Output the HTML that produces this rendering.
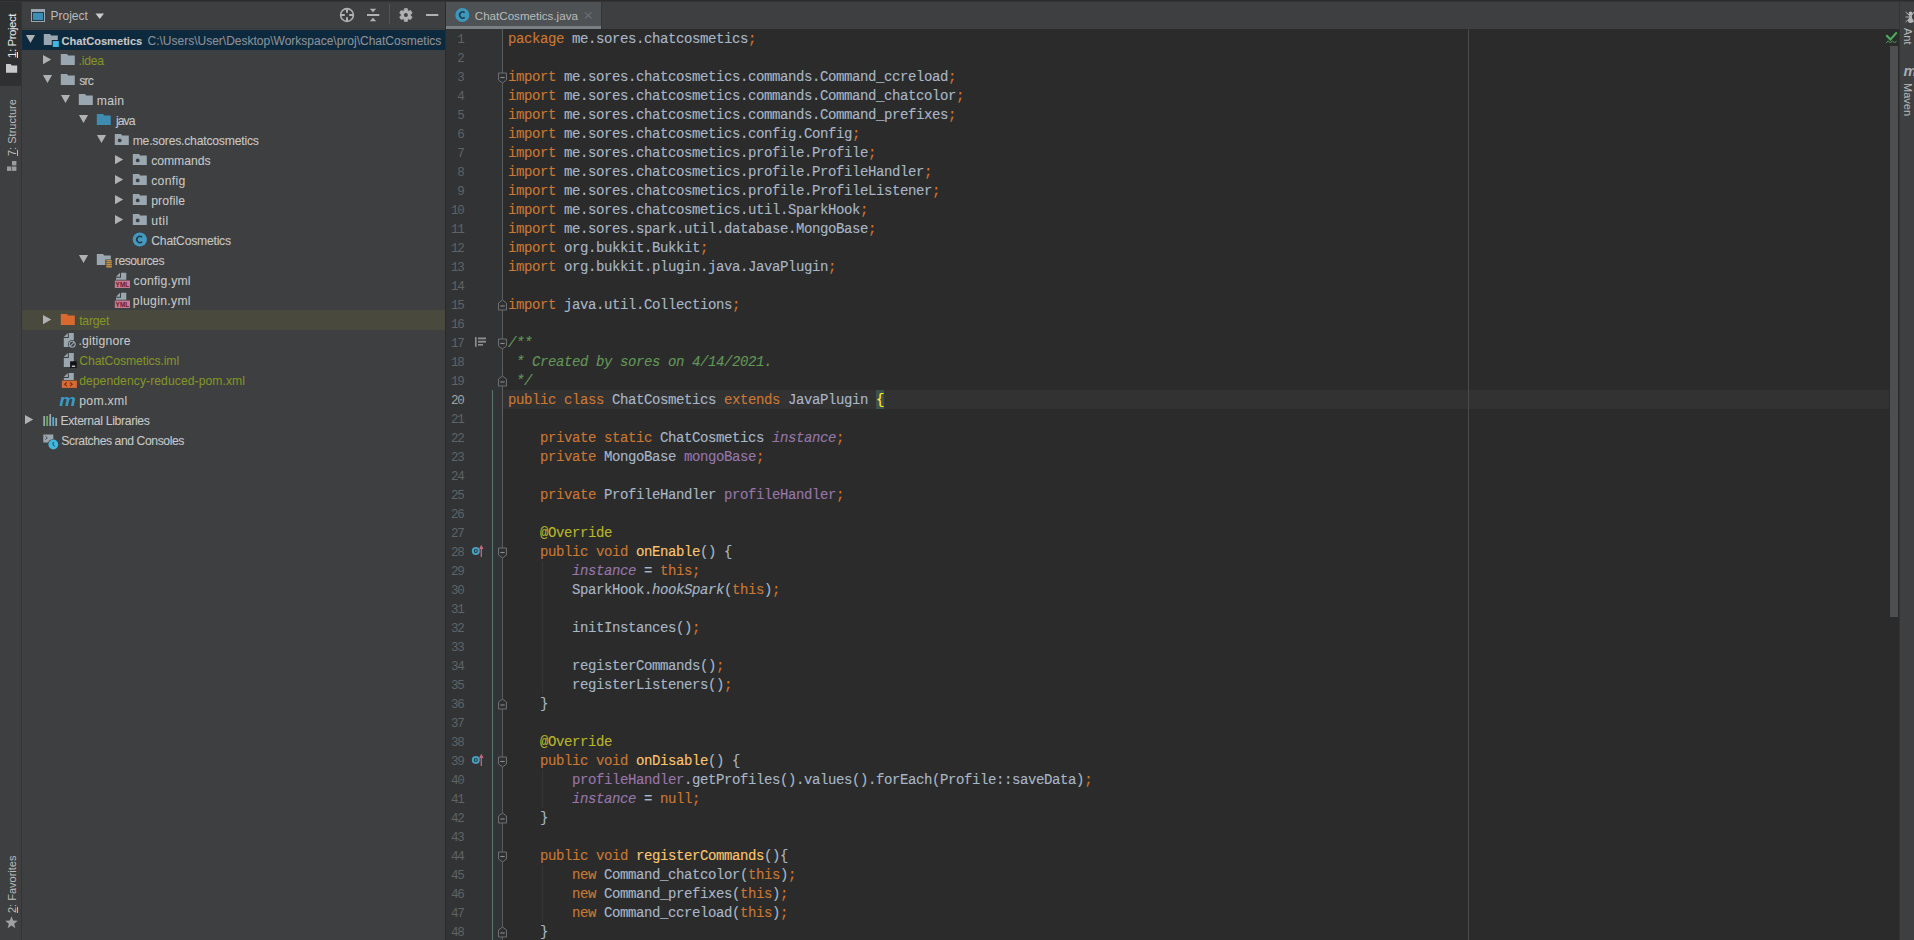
<!DOCTYPE html>
<html><head><meta charset="utf-8"><style>
*{margin:0;padding:0;box-sizing:border-box}
html,body{width:1914px;height:940px;overflow:hidden;background:#3D3F40}
body{position:relative;font-family:"Liberation Sans",sans-serif}
div{position:absolute}
#topline{left:0;top:0;width:1914px;height:2px;background:#2B2B2B;border-bottom:1px solid #343638}
#lstrip{left:0;top:2px;width:21px;height:938px;background:#3D3F40}
#lsel{left:0;top:2px;width:21px;height:84px;background:#2F3032}
#lborder{left:21px;top:2px;width:1px;height:938px;background:#323435}
.vt{font-size:11px;line-height:12px;color:#BBBBBB;white-space:nowrap;transform-origin:0 0}
.vl{transform:rotate(-90deg)}
.vr{transform:rotate(90deg)}
#panel{left:22px;top:2px;width:423px;height:938px;background:#3D3F40}
#hdrline{left:22px;top:28px;width:423px;height:1px;background:#37393B}
#divider{left:445px;top:2px;width:1px;height:938px;background:#2B2B2B}
.sel{left:22px;width:423px;height:20px;background:#0D293E}
.exclrow{left:22px;width:423px;height:20px;background:#49493D}
.tt{height:20px;line-height:20px;font-size:12.2px;color:#C8C8C8;white-space:nowrap;-webkit-text-stroke:0.08px currentColor}
.tt.b{font-weight:bold;font-size:11.1px}
.tt.path{font-size:12px;color:#8E9297}
.tt.ign{color:#869428}
#hdrtext{left:50.5px;top:8px;height:16px;line-height:16px;font-size:12px;color:#BBBBBB;white-space:nowrap}
#tabbar{left:446px;top:2px;width:1453px;height:27px;background:#3D3F40}
#tab{left:446px;top:2px;width:155px;height:24px;background:#4E5254}
#tabline{left:446px;top:26px;width:155px;height:3px;background:#7A7F84}
#tabedge{left:601px;top:2px;width:1px;height:27px;background:#333537}
#tabtext{left:474.8px;top:8px;height:16px;line-height:16px;font-size:11.6px;color:#BBBBBB;white-space:nowrap}
#gutter{left:446px;top:29px;width:56px;height:911px;background:#313335}
#scopeline{left:492px;top:390px;width:1px;height:550px;background:#5B7673}
#foldline{left:502px;top:29px;width:1px;height:911px;background:#5B5C5D}
#editor{left:503px;top:29px;width:1396px;height:911px;background:#2B2B2B}
#caretrow{left:503px;top:390px;width:1386px;height:19px;background:#323232}
#margin{left:1468px;top:29px;width:1px;height:911px;background:#4A4A4A}
#sbthumb{left:1890px;top:46px;width:8px;height:571px;background:#4D4E50}
#rstrip{left:1899px;top:2px;width:15px;height:938px;background:#3D3F40}
#rborder{left:1899px;top:2px;width:1px;height:938px;background:#323435}
.ln{left:508px;height:19px;line-height:19px;font-family:"Liberation Mono",monospace;font-size:14px;letter-spacing:-0.4px;white-space:pre;color:#A9B7C6;-webkit-text-stroke:0.12px currentColor}
.num{left:433.5px;width:30px;height:19px;line-height:19px;font-family:"Liberation Mono",monospace;font-size:12.5px;text-align:right;color:#606366;letter-spacing:-1.3px}
.num.cur{color:#A4A3A3}
.k{color:#CC7832}.t{color:#A9B7C6}.f{color:#9876AA}.d{color:#629755}.a{color:#BBB529}.m{color:#FFC66D}.i{font-style:italic}
.br{color:#FFEF28}
#bracebg{left:876px;top:390px;width:8px;height:19px;background:#3B514D}
svg{position:absolute;left:0;top:0}
</style></head><body>
<div id="topline"></div>
<div id="lstrip"></div>
<div id="lsel"></div>
<div id="lborder"></div>
<div id="panel"></div>
<div id="hdrline"></div>
<div id="divider"></div>
<div id="hdrtext">Project</div>
<div class="sel" style="top:30px"></div><div class="tt b" style="left:61.5px;top:31px">ChatCosmetics</div><div class="tt path" style="left:147.5px;top:31px">C:\Users\User\Desktop\Workspace\proj\ChatCosmetics</div><div class="tt ign" style="left:78.50px;top:51px;letter-spacing:-0.200px">.idea</div><div class="tt" style="left:79.30px;top:71px;letter-spacing:-0.880px">src</div><div class="tt" style="left:96.82px;top:91px;letter-spacing:0.267px">main</div><div class="tt" style="left:116.10px;top:111px;letter-spacing:-1.013px">java</div><div class="tt" style="left:132.66px;top:131px;letter-spacing:-0.213px">me.sores.chatcosmetics</div><div class="tt" style="left:151.14px;top:151px;letter-spacing:-0.023px">commands</div><div class="tt" style="left:151.14px;top:171px;letter-spacing:0.320px">config</div><div class="tt" style="left:151.14px;top:191px;letter-spacing:0.133px">profile</div><div class="tt" style="left:151.14px;top:211px;letter-spacing:0.480px">util</div><div class="tt" style="left:151.30px;top:231px;letter-spacing:-0.240px">ChatCosmetics</div><div class="tt" style="left:114.82px;top:251px;letter-spacing:-0.480px">resources</div><div class="tt" style="left:133.62px;top:271px;letter-spacing:0.231px">config.yml</div><div class="tt" style="left:132.82px;top:291px;letter-spacing:0.320px">plugin.yml</div><div class="exclrow" style="top:310px"></div><div class="tt ign" style="left:79.14px;top:311px;letter-spacing:-0.192px">target</div><div class="tt" style="left:78.50px;top:331px;letter-spacing:0.213px">.gitignore</div><div class="tt ign" style="left:79.30px;top:351px;letter-spacing:-0.110px">ChatCosmetics.iml</div><div class="tt ign" style="left:79.14px;top:371px;letter-spacing:0.051px">dependency-reduced-pom.xml</div><div class="tt" style="left:79.30px;top:391px;letter-spacing:0.293px">pom.xml</div><div class="tt" style="left:60.50px;top:411px;letter-spacing:-0.320px">External Libraries</div><div class="tt" style="left:61.30px;top:431px;letter-spacing:-0.427px">Scratches and Consoles</div>
<div id="tabbar"></div>
<div id="tab"></div>
<div id="tabline"></div>
<div id="tabedge"></div>
<div id="tabtext">ChatCosmetics.java</div>
<div id="gutter"></div>
<div id="scopeline"></div>
<div id="foldline"></div>
<div id="editor"></div>
<div id="caretrow"></div>
<div id="bracebg"></div>
<div id="margin"></div>
<div id="sbthumb"></div>
<div id="rstrip"></div>
<div id="rborder"></div>
<div class="vt vl" style="left:6px;top:58px;color:#E8E8E8;font-size:11.5px;letter-spacing:-0.45px"><u>1</u>: Project</div>
<div class="vt vl" style="left:6px;top:156px"><u>7</u>: Structure</div>
<div class="vt vl" style="left:6px;top:913px"><u>2</u>: Favorites</div>
<div class="vt vr" style="left:1914px;top:27.5px">Ant</div>
<div class="vt vr" style="left:1914px;top:83px">Maven</div>
<div class="num" style="top:31px">1</div><div class="num" style="top:50px">2</div><div class="num" style="top:69px">3</div><div class="num" style="top:88px">4</div><div class="num" style="top:107px">5</div><div class="num" style="top:126px">6</div><div class="num" style="top:145px">7</div><div class="num" style="top:164px">8</div><div class="num" style="top:183px">9</div><div class="num" style="top:202px">10</div><div class="num" style="top:221px">11</div><div class="num" style="top:240px">12</div><div class="num" style="top:259px">13</div><div class="num" style="top:278px">14</div><div class="num" style="top:297px">15</div><div class="num" style="top:316px">16</div><div class="num" style="top:335px">17</div><div class="num" style="top:354px">18</div><div class="num" style="top:373px">19</div><div class="num cur" style="top:392px">20</div><div class="num" style="top:411px">21</div><div class="num" style="top:430px">22</div><div class="num" style="top:449px">23</div><div class="num" style="top:468px">24</div><div class="num" style="top:487px">25</div><div class="num" style="top:506px">26</div><div class="num" style="top:525px">27</div><div class="num" style="top:544px">28</div><div class="num" style="top:563px">29</div><div class="num" style="top:582px">30</div><div class="num" style="top:601px">31</div><div class="num" style="top:620px">32</div><div class="num" style="top:639px">33</div><div class="num" style="top:658px">34</div><div class="num" style="top:677px">35</div><div class="num" style="top:696px">36</div><div class="num" style="top:715px">37</div><div class="num" style="top:734px">38</div><div class="num" style="top:753px">39</div><div class="num" style="top:772px">40</div><div class="num" style="top:791px">41</div><div class="num" style="top:810px">42</div><div class="num" style="top:829px">43</div><div class="num" style="top:848px">44</div><div class="num" style="top:867px">45</div><div class="num" style="top:886px">46</div><div class="num" style="top:905px">47</div><div class="num" style="top:924px">48</div>
<div class="ln" style="top:30px"><span class="k">package</span><span class="t"> me.sores.chatcosmetics</span><span class="k">;</span></div><div class="ln" style="top:49px"></div><div class="ln" style="top:68px"><span class="k">import</span><span class="t"> me.sores.chatcosmetics.commands.Command_ccreload</span><span class="k">;</span></div><div class="ln" style="top:87px"><span class="k">import</span><span class="t"> me.sores.chatcosmetics.commands.Command_chatcolor</span><span class="k">;</span></div><div class="ln" style="top:106px"><span class="k">import</span><span class="t"> me.sores.chatcosmetics.commands.Command_prefixes</span><span class="k">;</span></div><div class="ln" style="top:125px"><span class="k">import</span><span class="t"> me.sores.chatcosmetics.config.Config</span><span class="k">;</span></div><div class="ln" style="top:144px"><span class="k">import</span><span class="t"> me.sores.chatcosmetics.profile.Profile</span><span class="k">;</span></div><div class="ln" style="top:163px"><span class="k">import</span><span class="t"> me.sores.chatcosmetics.profile.ProfileHandler</span><span class="k">;</span></div><div class="ln" style="top:182px"><span class="k">import</span><span class="t"> me.sores.chatcosmetics.profile.ProfileListener</span><span class="k">;</span></div><div class="ln" style="top:201px"><span class="k">import</span><span class="t"> me.sores.chatcosmetics.util.SparkHook</span><span class="k">;</span></div><div class="ln" style="top:220px"><span class="k">import</span><span class="t"> me.sores.spark.util.database.MongoBase</span><span class="k">;</span></div><div class="ln" style="top:239px"><span class="k">import</span><span class="t"> org.bukkit.Bukkit</span><span class="k">;</span></div><div class="ln" style="top:258px"><span class="k">import</span><span class="t"> org.bukkit.plugin.java.JavaPlugin</span><span class="k">;</span></div><div class="ln" style="top:277px"></div><div class="ln" style="top:296px"><span class="k">import</span><span class="t"> java.util.Collections</span><span class="k">;</span></div><div class="ln" style="top:315px"></div><div class="ln" style="top:334px"><span class="d i">/**</span></div><div class="ln" style="top:353px"><span class="d i"> * Created by sores on 4/14/2021.</span></div><div class="ln" style="top:372px"><span class="d i"> */</span></div><div class="ln" style="top:391px"><span class="k">public class </span><span class="t">ChatCosmetics </span><span class="k">extends </span><span class="t">JavaPlugin </span><span class="br">{</span></div><div class="ln" style="top:410px"></div><div class="ln" style="top:429px"><span class="t">    </span><span class="k">private static </span><span class="t">ChatCosmetics </span><span class="f i">instance</span><span class="k">;</span></div><div class="ln" style="top:448px"><span class="t">    </span><span class="k">private </span><span class="t">MongoBase </span><span class="f">mongoBase</span><span class="k">;</span></div><div class="ln" style="top:467px"></div><div class="ln" style="top:486px"><span class="t">    </span><span class="k">private </span><span class="t">ProfileHandler </span><span class="f">profileHandler</span><span class="k">;</span></div><div class="ln" style="top:505px"></div><div class="ln" style="top:524px"><span class="t">    </span><span class="a">@Override</span></div><div class="ln" style="top:543px"><span class="t">    </span><span class="k">public void </span><span class="m">onEnable</span><span class="t">() {</span></div><div class="ln" style="top:562px"><span class="t">        </span><span class="f i">instance</span><span class="t"> = </span><span class="k">this;</span></div><div class="ln" style="top:581px"><span class="t">        SparkHook.</span><span class="t i">hookSpark</span><span class="t">(</span><span class="k">this</span><span class="t">)</span><span class="k">;</span></div><div class="ln" style="top:600px"></div><div class="ln" style="top:619px"><span class="t">        initInstances()</span><span class="k">;</span></div><div class="ln" style="top:638px"></div><div class="ln" style="top:657px"><span class="t">        registerCommands()</span><span class="k">;</span></div><div class="ln" style="top:676px"><span class="t">        registerListeners()</span><span class="k">;</span></div><div class="ln" style="top:695px"><span class="t">    }</span></div><div class="ln" style="top:714px"></div><div class="ln" style="top:733px"><span class="t">    </span><span class="a">@Override</span></div><div class="ln" style="top:752px"><span class="t">    </span><span class="k">public void </span><span class="m">onDisable</span><span class="t">() {</span></div><div class="ln" style="top:771px"><span class="t">        </span><span class="f">profileHandler</span><span class="t">.getProfiles().values().forEach(Profile::saveData)</span><span class="k">;</span></div><div class="ln" style="top:790px"><span class="t">        </span><span class="f i">instance</span><span class="t"> = </span><span class="k">null;</span></div><div class="ln" style="top:809px"><span class="t">    }</span></div><div class="ln" style="top:828px"></div><div class="ln" style="top:847px"><span class="t">    </span><span class="k">public void </span><span class="m">registerCommands</span><span class="t">(){</span></div><div class="ln" style="top:866px"><span class="t">        </span><span class="k">new </span><span class="t">Command_chatcolor(</span><span class="k">this</span><span class="t">)</span><span class="k">;</span></div><div class="ln" style="top:885px"><span class="t">        </span><span class="k">new </span><span class="t">Command_prefixes(</span><span class="k">this</span><span class="t">)</span><span class="k">;</span></div><div class="ln" style="top:904px"><span class="t">        </span><span class="k">new </span><span class="t">Command_ccreload(</span><span class="k">this</span><span class="t">)</span><span class="k">;</span></div><div class="ln" style="top:923px"><span class="t">    }</span></div>
<svg width="1914" height="940" viewBox="0 0 1914 940"><rect x="31" y="9" width="14" height="13" fill="#9AA7B0"/><rect x="32" y="12" width="12" height="9" fill="#1f3a48"/><rect x="33" y="13" width="10" height="7" fill="#3D8DB5"/><path d="M95.5 13.5h8.5l-4.25 5.5z" fill="#C9CBCD"/><circle cx="347" cy="15" r="6.4" fill="none" stroke="#AFB1B3" stroke-width="1.6"/><path d="M340 15h4.8M349.2 15h4.8M347 8v4.8M347 17.2v4.8" stroke="#AFB1B3" stroke-width="2"/><rect x="367" y="14" width="12.3" height="2" fill="#AFB1B3"/><path d="M369.8 8.8h6.4l-3.2 3.4z" fill="#AFB1B3"/><path d="M373 17.8l3.2 3.4h-6.4z" fill="#AFB1B3"/><rect x="389" y="4" width="1" height="20" fill="#515457"/><polygon points="404.42,8.57 407.38,8.57 408.05,11.28 410.73,10.50 412.21,13.07 410.20,15.00 412.21,16.93 410.73,19.50 408.05,18.72 407.38,21.43 404.42,21.43 403.75,18.72 401.07,19.50 399.59,16.93 401.60,15.00 399.59,13.07 401.07,10.50 403.75,11.28" fill="#AFB1B3" stroke="#AFB1B3" stroke-width="0.6" stroke-linejoin="round"/><circle cx="405.9" cy="15" r="2" fill="#3D3F40"/><rect x="426" y="14" width="12.3" height="2" fill="#AFB1B3"/><path d="M6 64h4.5l1.3 1.6h5.4v7.2h-11.2z" fill="#C7C9CB"/><rect x="12" y="161" width="4.4" height="4.4" fill="#9A9C9E"/><rect x="7" y="166.5" width="4.4" height="4.4" fill="#9A9C9E"/><rect x="12" y="166.5" width="4.4" height="4.4" fill="#9A9C9E"/><polygon points="11.50,916.20 13.15,920.53 17.78,920.76 14.16,923.67 15.38,928.14 11.50,925.60 7.62,928.14 8.84,923.67 5.22,920.76 9.85,920.53" fill="#A0A2A4"/><circle cx="462.3" cy="15" r="7" fill="#3E97BC"/><path d="M464.7 12.6a3.1 3.1 0 1 0 0 4.8" stroke="#1B3F4E" stroke-width="1.5" fill="none"/><path d="M585 12.3l6.5 6.2M591.5 12.3l-6.5 6.2" stroke="#6C7073" stroke-width="1.1"/><g fill="#B4B6B8"><circle cx="1910.6" cy="13.6" r="2"/><circle cx="1910.6" cy="17" r="1.5"/><ellipse cx="1910.6" cy="20.4" rx="2.6" ry="2.5"/></g><path d="M1905.6 12l5 4.5M1905.6 17h5M1905.6 22l5-4.5M1914 12l-3.4 4.5M1914 22l-3.4-4.5" stroke="#B4B6B8" stroke-width="1"/><text x="1903.5" y="75.6" font-family="Liberation Sans" font-weight="bold" font-style="italic" font-size="15" fill="#A9ABAD">m</text><rect x="1884" y="29" width="15" height="16" fill="#2B2B2B"/><path d="M1886.3 35.2l4.2 4.2l6.3-7" stroke="#1E3A22" stroke-width="3.2" fill="none"/><path d="M1886.3 35.2l4.2 4.2l6.3-7" stroke="#55A862" stroke-width="2.1" fill="none"/><path d="M1886.2 43l2.1-2.2 2.1 2.2 2.1-2.2 2.1 2.2 2.1-2.2" stroke="#4E9A5A" stroke-width="1" fill="none"/><path d="M25.9 35h9.2l-4.6 8z" fill="#AFB1B3"/><path d="M43.8 34h6.2l1.2 1.6h6.6v9.4h-14z" fill="#9AA7B0"/><rect x="51.8" y="40" width="8" height="8" fill="#0D293E"/><rect x="52.8" y="41" width="6" height="6" fill="#40B6E0"/><path d="M43 55v9.2l8.2-4.6z" fill="#AFB1B3"/><path d="M60.8 54h6.2l1.2 1.6h6.6v9.4h-14z" fill="#9AA7B0"/><path d="M42.9 75h9.2l-4.6 8z" fill="#AFB1B3"/><path d="M60.8 74h6.2l1.2 1.6h6.6v9.4h-14z" fill="#9AA7B0"/><path d="M60.9 95h9.2l-4.6 8z" fill="#AFB1B3"/><path d="M78.8 94h6.2l1.2 1.6h6.6v9.4h-14z" fill="#9AA7B0"/><path d="M78.9 115h9.2l-4.6 8z" fill="#AFB1B3"/><path d="M96.8 114h6.2l1.2 1.6h6.6v9.4h-14z" fill="#3E8DB0"/><path d="M96.9 135h9.2l-4.6 8z" fill="#AFB1B3"/><path d="M114.8 134h6.2l1.2 1.6h6.6v9.4h-14z" fill="#9AA7B0"/><circle cx="119.7" cy="140.4" r="1.9" fill="#3D3F40"/><path d="M115 155v9.2l8.2-4.6z" fill="#AFB1B3"/><path d="M132.8 154h6.2l1.2 1.6h6.6v9.4h-14z" fill="#9AA7B0"/><circle cx="137.70000000000002" cy="160.4" r="1.9" fill="#3D3F40"/><path d="M115 175v9.2l8.2-4.6z" fill="#AFB1B3"/><path d="M132.8 174h6.2l1.2 1.6h6.6v9.4h-14z" fill="#9AA7B0"/><circle cx="137.70000000000002" cy="180.4" r="1.9" fill="#3D3F40"/><path d="M115 195v9.2l8.2-4.6z" fill="#AFB1B3"/><path d="M132.8 194h6.2l1.2 1.6h6.6v9.4h-14z" fill="#9AA7B0"/><circle cx="137.70000000000002" cy="200.4" r="1.9" fill="#3D3F40"/><path d="M115 215v9.2l8.2-4.6z" fill="#AFB1B3"/><path d="M132.8 214h6.2l1.2 1.6h6.6v9.4h-14z" fill="#9AA7B0"/><circle cx="137.70000000000002" cy="220.4" r="1.9" fill="#3D3F40"/><circle cx="139.8" cy="239.5" r="7.1" fill="#4499BE"/><path d="M142.10000000000002 237.3a3.1 3.1 0 1 0 0 4.4" stroke="#183C4C" stroke-width="1.5" fill="none"/><path d="M78.9 255h9.2l-4.6 8z" fill="#AFB1B3"/><path d="M96.8 254h6.2l1.2 1.6h6.6v9.4h-14z" fill="#9AA7B0"/><rect x="105.3" y="259.5" width="7" height="9" fill="#3D3F40"/><g fill="#E8A33D"><rect x="106.3" y="260.2" width="5.5" height="1.2"/><rect x="106.3" y="262.2" width="5.5" height="1.2"/><rect x="106.3" y="264.2" width="5.5" height="1.2"/><rect x="106.3" y="266.2" width="5.5" height="1.2"/></g><path d="M121.0 272.8h5.300000000000001v7h-10.3v-2h5z" fill="#9AA7B0"/><path d="M116.0 276.8h4v-4z" fill="#9AA7B0"/><rect x="114.8" y="280.5" width="15.2" height="7.5" fill="#C47A90"/><text x="122.39999999999999" y="287.3" font-size="7.6" font-weight="bold" font-family="Liberation Sans" fill="#6E1A32" text-anchor="middle" textLength="13.6" lengthAdjust="spacingAndGlyphs">YML</text><path d="M121.0 292.8h5.300000000000001v7h-10.3v-2h5z" fill="#9AA7B0"/><path d="M116.0 296.8h4v-4z" fill="#9AA7B0"/><rect x="114.8" y="300.5" width="15.2" height="7.5" fill="#C47A90"/><text x="122.39999999999999" y="307.3" font-size="7.6" font-weight="bold" font-family="Liberation Sans" fill="#6E1A32" text-anchor="middle" textLength="13.6" lengthAdjust="spacingAndGlyphs">YML</text><path d="M43 315v9.2l8.2-4.6z" fill="#AFB1B3"/><path d="M60.8 314h6.2l1.2 1.6h6.6v9.4h-14z" fill="#D9692F"/><path d="M68.8 333h5v14h-10v-9h5z" fill="#9AA7B0"/><path d="M63.8 337h4v-4z" fill="#9AA7B0"/><circle cx="72.2" cy="344.2" r="4.3" fill="#3D3F40"/><circle cx="72.2" cy="344.2" r="3" fill="none" stroke="#9AA7B0" stroke-width="1.1"/><path d="M70.2 346.2l4-4" stroke="#9AA7B0" stroke-width="1.1"/><path d="M68.8 353h5v14h-10v-9h5z" fill="#9AA7B0"/><path d="M63.8 357h4v-4z" fill="#9AA7B0"/><rect x="70.1" y="361.3" width="6.6" height="6.6" fill="#111214"/><rect x="71.8" y="365.6" width="3.4" height="1.2" fill="#E8E8E8"/><path d="M68.8 373h5v7h-10v-2h5z" fill="#9AA7B0"/><path d="M63.8 377h4v-4z" fill="#9AA7B0"/><rect x="61.8" y="380.6" width="15.1" height="7.3" fill="#D86A33"/><path d="M66.8 382.3l-2.2 1.95l2.2 1.95M70.0 382.3l2.2 1.95l-2.2 1.95" stroke="#7A2A10" stroke-width="1.1" fill="none"/><text x="59.3" y="405.6" font-size="17" font-weight="bold" font-style="italic" font-family="Liberation Sans" fill="#3B9AC4" textLength="16.5" lengthAdjust="spacingAndGlyphs">m</text><path d="M25 415v9.2l8.2-4.6z" fill="#AFB1B3"/><rect x="43.3" y="416" width="1.8" height="10" fill="#9AA7B0"/><rect x="46.3" y="416" width="1.8" height="10" fill="#62B543"/><rect x="49.3" y="414" width="1.8" height="12" fill="#9AA7B0"/><rect x="52.3" y="417" width="1.8" height="9" fill="#40B6E0"/><rect x="55.3" y="418" width="1.8" height="8" fill="#9AA7B0"/><rect x="43.3" y="434.5" width="10" height="8" fill="#9AA7B0"/><path d="M45.3 436l2 1.8-2 1.8" stroke="#3D3F40" stroke-width="0.9" fill="none"/><circle cx="53.3" cy="444.5" r="5.6" fill="#3D3F40"/><circle cx="53.3" cy="444.5" r="4.9" fill="#40B6E0"/><path d="M53.099999999999994 442v2.8l1.8 1.6" stroke="#1B4555" stroke-width="1" fill="none"/><path d="M498.5 73.0h8v7l-4 3l-4-3z" fill="#2E3032" stroke="#6E6F70" stroke-width="1"/><path d="M500.3 77.5h4.4" stroke="#8A8B8C" stroke-width="1.1"/><path d="M498.5 339.0h8v7l-4 3l-4-3z" fill="#2E3032" stroke="#6E6F70" stroke-width="1"/><path d="M500.3 343.5h4.4" stroke="#8A8B8C" stroke-width="1.1"/><path d="M498.5 548.0h8v7l-4 3l-4-3z" fill="#2E3032" stroke="#6E6F70" stroke-width="1"/><path d="M500.3 552.5h4.4" stroke="#8A8B8C" stroke-width="1.1"/><path d="M498.5 757.0h8v7l-4 3l-4-3z" fill="#2E3032" stroke="#6E6F70" stroke-width="1"/><path d="M500.3 761.5h4.4" stroke="#8A8B8C" stroke-width="1.1"/><path d="M498.5 852.0h8v7l-4 3l-4-3z" fill="#2E3032" stroke="#6E6F70" stroke-width="1"/><path d="M500.3 856.5h4.4" stroke="#8A8B8C" stroke-width="1.1"/><path d="M498.5 310.0h8v-7l-4-3l-4 3z" fill="#2E3032" stroke="#6E6F70" stroke-width="1"/><path d="M500.3 306.0h4.4" stroke="#8A8B8C" stroke-width="1.1"/><path d="M498.5 386.0h8v-7l-4-3l-4 3z" fill="#2E3032" stroke="#6E6F70" stroke-width="1"/><path d="M500.3 382.0h4.4" stroke="#8A8B8C" stroke-width="1.1"/><path d="M498.5 709.0h8v-7l-4-3l-4 3z" fill="#2E3032" stroke="#6E6F70" stroke-width="1"/><path d="M500.3 705.0h4.4" stroke="#8A8B8C" stroke-width="1.1"/><path d="M498.5 823.0h8v-7l-4-3l-4 3z" fill="#2E3032" stroke="#6E6F70" stroke-width="1"/><path d="M500.3 819.0h4.4" stroke="#8A8B8C" stroke-width="1.1"/><path d="M498.5 937.0h8v-7l-4-3l-4 3z" fill="#2E3032" stroke="#6E6F70" stroke-width="1"/><path d="M500.3 933.0h4.4" stroke="#8A8B8C" stroke-width="1.1"/><g fill="#8E9092"><rect x="475" y="337.0" width="1.6" height="9.8"/><rect x="478" y="337.5" width="8" height="1.8"/><rect x="478" y="340.8" width="8" height="1.8"/><rect x="478" y="344.0" width="5" height="1.6"/></g><circle cx="475.8" cy="550.9" r="4" fill="#46A0BE"/><circle cx="475.8" cy="550.9" r="2" fill="#1F3A44"/><circle cx="475.8" cy="550.9" r="1" fill="#4FA3B0"/><path d="M481.3 557.0v-9" stroke="#C9687C" stroke-width="1.3"/><path d="M479.1 548.9l2.2-4.1l2.2 4.1z" fill="#C9687C"/><circle cx="475.8" cy="759.9" r="4" fill="#46A0BE"/><circle cx="475.8" cy="759.9" r="2" fill="#1F3A44"/><circle cx="475.8" cy="759.9" r="1" fill="#4FA3B0"/><path d="M481.3 766.0v-9" stroke="#C9687C" stroke-width="1.3"/><path d="M479.1 757.9l2.2-4.1l2.2 4.1z" fill="#C9687C"/><rect x="542" y="561" width="1" height="133" fill="#353636"/><rect x="542" y="770" width="1" height="38" fill="#353636"/><rect x="542" y="865" width="1" height="57" fill="#353636"/></svg>
</body></html>
